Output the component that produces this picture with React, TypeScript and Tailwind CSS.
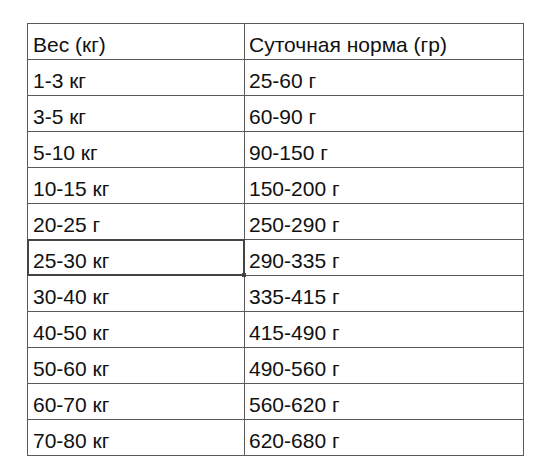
import React from "react";

const rows: [string, string][] = [
  ["Вес (кг)", "Суточная норма (гр)"],
  ["1-3 кг", "25-60 г"],
  ["3-5 кг", "60-90 г"],
  ["5-10 кг", "90-150 г"],
  ["10-15 кг", "150-200 г"],
  ["20-25 г", "250-290 г"],
  ["25-30 кг", "290-335 г"],
  ["30-40 кг", "335-415 г"],
  ["40-50 кг", "415-490 г"],
  ["50-60 кг", "490-560 г"],
  ["60-70 кг", "560-620 г"],
  ["70-80 кг", "620-680 г"],
];

export default function App() {
  return (
    <div className="w-[550px] h-[476px] bg-white pt-[23px] pl-[27px]" style={{ fontFamily: '"Liberation Sans", Arial, sans-serif' }}>
      <table className="border-collapse text-[21px] leading-none text-[#111]">
        <tbody>
          {rows.map(([a, b], i) => (
            <tr key={i} className="h-[36px]">
              <td className={"relative w-[217px] border border-[#5a5a5a] pl-[5px] pt-[6px] align-middle"}>
                {i === 6 && (
                  <div className="absolute -inset-[1px] border-2 border-[#444]">
                    <div className="absolute -right-[3px] -bottom-[3px] w-[4px] h-[4px] bg-[#444]" />
                  </div>
                )}
                {a}
              </td>
              <td className="w-[279px] border border-[#5a5a5a] pl-[4px] pt-[6px] align-middle">{b}</td>
            </tr>
          ))}
        </tbody>
      </table>
    </div>
  );
}
